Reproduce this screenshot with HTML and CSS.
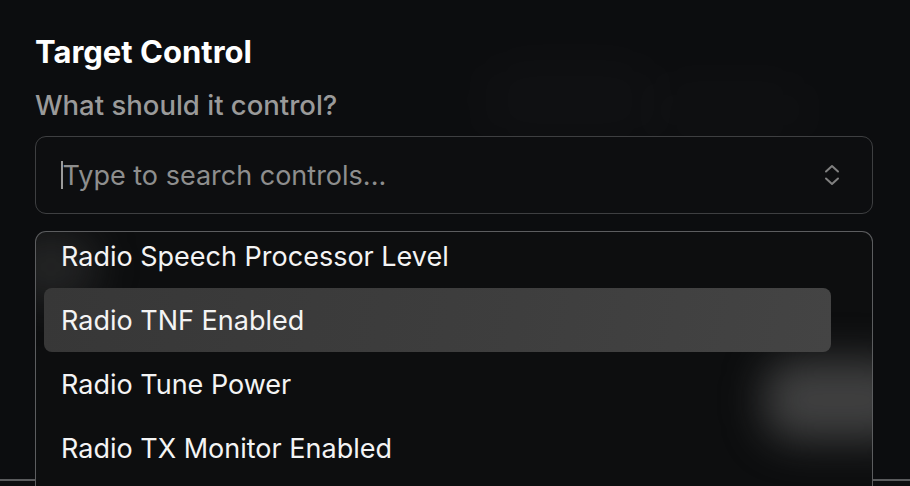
FILE: index.html
```html
<!DOCTYPE html>
<html lang="en">
<head>
<meta charset="utf-8">
<title>Target Control</title>
<link rel="stylesheet" href="styles.css">
</head>
<body>
<div class="sheet">
  <div class="bg-blob blob-a"></div>
  <div class="bg-blob blob-b"></div>
  <section class="section">
    <h2 class="title">Target Control</h2>
    <p class="label">What should it control?</p>
    <div class="combo">
      <div class="combo-input">
        <span class="caret"></span><span class="placeholder">Type to search controls...</span>
        <svg class="chevrons" width="16" height="24" viewBox="0 0 16 24" fill="none" stroke="#808080" stroke-width="2" stroke-linecap="round" stroke-linejoin="round"><path d="M2 8.5 L8 3 L14 8.5"/><path d="M2 15.5 L8 21 L14 15.5"/></svg>
      </div>
      <div class="dropdown">
        <div class="glow glow-1"></div>
        <div class="glow glow-2"></div>
        <ul class="options">
          <li class="option">Radio Speech Processor Level</li>
          <li class="option active">Radio TNF Enabled</li>
          <li class="option">Radio Tune Power</li>
          <li class="option">Radio TX Monitor Enabled</li>
        </ul>
      </div>
    </div>
  </section>
  <div class="footer-line"></div>
</div>
</body>
</html>
```
FILE: styles.css
```css
html, body {
  margin: 0;
  padding: 0;
  background: #0c0d0f;
  height: 100%;
  overflow: hidden;
}
body {
  font-family: Inter, "Noto Sans", "Liberation Sans", sans-serif;
  color: #f2f2f2;
}
.sheet {
  position: relative;
  height: 486px;
  display: flex;
  flex-direction: column;
  overflow: hidden;
}
.bg-blob {
  position: absolute;
  border-radius: 40px;
  filter: blur(30px);
  background: rgba(255,255,255,0.02);
}
.blob-a { left: 470px; top: 60px; width: 200px; height: 80px; }
.blob-b { left: 640px; top: 80px; width: 180px; height: 60px; }
.section {
  position: relative;
  padding: 34px 37px 0 35px;
  height: 445px;
}
.title {
  margin: 0;
  font-size: 31px;
  line-height: 36px;
  font-weight: 700;
  color: #ffffff;
}
.label {
  margin: 18px 0 0;
  font-size: 27.5px;
  line-height: 34px;
  font-weight: 500;
  color: #9a9a9a;
}
.combo {
  position: relative;
  margin-top: 14px;
}
.combo-input {
  height: 78px;
  box-sizing: border-box;
  border: 1.5px solid #3e3f41;
  border-radius: 11px;
  display: flex;
  align-items: center;
  padding: 0 32px 0 25px;
  background: #0d0e10;
}
.caret {
  width: 1.5px;
  height: 28px;
  background: #9a9a9a;
}
.placeholder {
  flex: 1;
  font-size: 27px;
  color: #8e8e8e;
}
.chevrons { display: block; }
.dropdown {
  position: absolute;
  left: 0;
  right: 0;
  top: 95px;
  height: 255px;
  border: 1.5px solid #5c5d5f;
  border-bottom: 0;
  border-radius: 11px 11px 0 0;
  background: #0d0e0f;
  overflow: hidden;
}
.glow {
  position: absolute;
  filter: blur(20px);
  border-radius: 30px;
}
.glow-1 {
  left: 728px;
  top: 128px;
  width: 150px;
  height: 80px;
  background: rgba(85,85,85,0.7);
}
.glow-2 {
  left: -30px;
  top: 0px;
  width: 90px;
  height: 70px;
  background: rgba(70,70,70,0.4);
}
.options {
  position: relative;
  list-style: none;
  margin: 0;
  padding: 0 41px 0 8px;
  transform: translateY(-8px);
}
.option {
  height: 64px;
  display: flex;
  align-items: center;
  padding-left: 17px;
  font-size: 27px;
  color: #f4f4f4;
  border-radius: 8px;
}
.option.active {
  background: linear-gradient(100deg, #373737 0%, #3e3e3e 60%, #444444 100%);
}
.footer-line {
  height: 1.5px;
  background: #5a5b5d;
}
```
